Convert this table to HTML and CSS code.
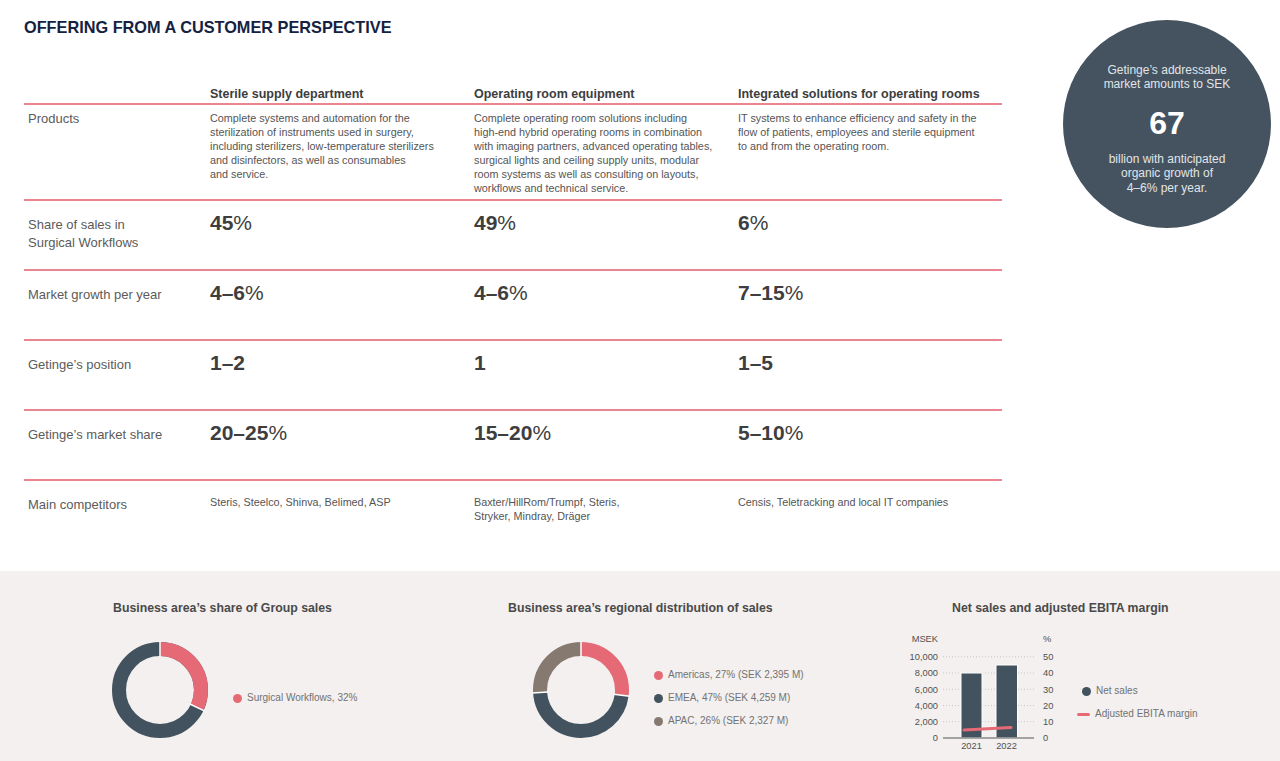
FILE: index.html
```html
<!DOCTYPE html>
<html lang="en">
<head>
<meta charset="utf-8">
<title>Offering from a customer perspective</title>
<link rel="stylesheet" href="styles.css">
</head>
<body>
<div class="page">
  <section class="top">
    <div class="main">
      <h1 class="title">OFFERING FROM A CUSTOMER PERSPECTIVE</h1>
      <div class="table">
        <div class="row head">
          <div class="lbl"></div>
          <div class="th">Sterile supply department</div>
          <div class="th">Operating room equipment</div>
          <div class="th">Integrated solutions for operating rooms</div>
        </div>
        <div class="row products">
          <div class="lbl">Products</div>
          <div class="desc">Complete systems and automation for the<br>sterilization of instruments used in surgery,<br>including sterilizers, low-temperature sterilizers<br>and disinfectors, as well as consumables<br>and service.</div>
          <div class="desc">Complete operating room solutions including<br>high-end hybrid operating rooms in combination<br>with imaging partners, advanced operating tables,<br>surgical lights and ceiling supply units, modular<br>room systems as well as consulting on layouts,<br>workflows and technical service.</div>
          <div class="desc">IT systems to enhance efficiency and safety in the<br>flow of patients, employees and sterile equipment<br>to and from the operating room.</div>
        </div>
        <div class="row num">
          <div class="lbl">Share of sales in<br>Surgical Workflows</div>
          <div class="val">45<span class="pct">%</span></div>
          <div class="val">49<span class="pct">%</span></div>
          <div class="val">6<span class="pct">%</span></div>
        </div>
        <div class="row num">
          <div class="lbl">Market growth per year</div>
          <div class="val">4–6<span class="pct">%</span></div>
          <div class="val">4–6<span class="pct">%</span></div>
          <div class="val">7–15<span class="pct">%</span></div>
        </div>
        <div class="row num">
          <div class="lbl">Getinge’s position</div>
          <div class="val">1–2</div>
          <div class="val">1</div>
          <div class="val">1–5</div>
        </div>
        <div class="row num">
          <div class="lbl">Getinge’s market share</div>
          <div class="val">20–25<span class="pct">%</span></div>
          <div class="val">15–20<span class="pct">%</span></div>
          <div class="val">5–10<span class="pct">%</span></div>
        </div>
        <div class="row comp">
          <div class="lbl">Main competitors</div>
          <div class="ctext">Steris, Steelco, Shinva, Belimed, ASP</div>
          <div class="ctext">Baxter/HillRom/Trumpf, Steris,<br>Stryker, Mindray, Dräger</div>
          <div class="ctext">Censis, Teletracking and local IT companies</div>
        </div>
      </div>
    </div>
    <aside class="bubble">
      <p class="bub-text">Getinge’s addressable<br>market amounts to SEK</p>
      <p class="bub-num">67</p>
      <p class="bub-text">billion with anticipated<br>organic growth of<br>4–6% per year.</p>
    </aside>
  </section>

  <section class="bottom">
    <div class="panel p1">
      <h2 class="ptitle">Business area’s share of Group sales</h2>
      <div class="chart">
        <svg class="donut" width="100" height="100" viewBox="0 0 100 100">
          <g transform="rotate(-90 50 50)">
            <circle cx="50" cy="50" r="41" fill="none" stroke="#43525f" stroke-width="14"/>
            <circle cx="50" cy="50" r="41" fill="none" stroke="#e56a75" stroke-width="14" stroke-dasharray="82.44 257.61"/>
          </g>
          <line x1="50" y1="17" x2="50" y2="1" stroke="#fff" stroke-width="1.5"/>
          <line x1="79.86" y1="64.05" x2="94.34" y2="70.86" stroke="#fff" stroke-width="1.5"/>
        </svg>
        <ul class="legend">
          <li><span class="dot pink"></span>Surgical Workflows, 32%</li>
        </ul>
      </div>
    </div>

    <div class="panel p2">
      <h2 class="ptitle">Business area’s regional distribution of sales</h2>
      <div class="chart">
        <svg class="donut" width="100" height="100" viewBox="0 0 100 100">
          <g transform="rotate(-90 50 50)">
            <circle cx="50" cy="50" r="41" fill="none" stroke="#e56a75" stroke-width="14" stroke-dasharray="69.55 257.61"/>
            <circle cx="50" cy="50" r="41" fill="none" stroke="#43525f" stroke-width="14" stroke-dasharray="121.08 257.61" stroke-dashoffset="-69.55"/>
            <circle cx="50" cy="50" r="41" fill="none" stroke="#857970" stroke-width="14" stroke-dasharray="66.98 257.61" stroke-dashoffset="-190.63"/>
          </g>
          <line x1="50" y1="17" x2="50" y2="1" stroke="#fff" stroke-width="1.5"/>
          <line x1="82.74" y1="54.14" x2="98.61" y2="56.14" stroke="#fff" stroke-width="1.5"/>
          <line x1="17.07" y1="52.07" x2="1.10" y2="53.08" stroke="#fff" stroke-width="1.5"/>
        </svg>
        <ul class="legend">
          <li><span class="dot pink"></span>Americas, 27% (SEK 2,395 M)</li>
          <li><span class="dot slate"></span>EMEA, 47% (SEK 4,259 M)</li>
          <li><span class="dot taupe"></span>APAC, 26% (SEK 2,327 M)</li>
        </ul>
      </div>
    </div>

    <div class="panel p3">
      <h2 class="ptitle">Net sales and adjusted EBITA margin</h2>
      <div class="chart chart3">
        <svg class="bars" width="160" height="128" viewBox="0 0 160 128">
          <text class="ax" x="38" y="12" text-anchor="end">MSEK</text>
          <text class="ax" x="143" y="12">%</text>
          <g class="grid">
            <line x1="43" y1="26.75" x2="134" y2="26.75"/>
            <line x1="43" y1="43" x2="134" y2="43"/>
            <line x1="43" y1="59.25" x2="134" y2="59.25"/>
            <line x1="43" y1="75.5" x2="134" y2="75.5"/>
            <line x1="43" y1="91.75" x2="134" y2="91.75"/>
          </g>
          <text class="ax" x="38" y="30" text-anchor="end">10,000</text>
          <text class="ax" x="38" y="46.3" text-anchor="end">8,000</text>
          <text class="ax" x="38" y="62.5" text-anchor="end">6,000</text>
          <text class="ax" x="38" y="78.8" text-anchor="end">4,000</text>
          <text class="ax" x="38" y="95" text-anchor="end">2,000</text>
          <text class="ax" x="38" y="111.3" text-anchor="end">0</text>
          <text class="ax" x="143" y="30">50</text>
          <text class="ax" x="143" y="46.3">40</text>
          <text class="ax" x="143" y="62.5">30</text>
          <text class="ax" x="143" y="78.8">20</text>
          <text class="ax" x="143" y="95">10</text>
          <text class="ax" x="143" y="111.3">0</text>
          <rect x="61" y="43" width="21" height="65" fill="#43525f" stroke="#fff" stroke-width="1"/>
          <rect x="96" y="35" width="21.5" height="73" fill="#43525f" stroke="#fff" stroke-width="1"/>
          <line x1="43" y1="108" x2="134" y2="108" stroke="#8a8a8a" stroke-width="1.5"/>
          <line x1="64" y1="100" x2="111" y2="97.6" stroke="#e56a75" stroke-width="3" stroke-linecap="round"/>
          <text class="ax" x="71.5" y="118.5" text-anchor="middle">2021</text>
          <text class="ax" x="106.5" y="118.5" text-anchor="middle">2022</text>
        </svg>
        <ul class="legend legend3">
          <li><span class="dot slate dot3"></span>Net sales</li>
          <li><span class="bar-line"></span>Adjusted EBITA margin</li>
        </ul>
      </div>
    </div>
  </section>
</div>
</body>
</html>
```

FILE: styles.css
```css
* { box-sizing: border-box; }

body {
  margin: 0;
  background: #ffffff;
  font-family: "Liberation Sans", Arial, sans-serif;
  color: #555555;
}

.page {
  width: 1280px;
}

/* ---------- top ---------- */
.top {
  display: flex;
  height: 571px;
}

.main {
  width: 1002px;
  padding-left: 24px;
}

.title {
  margin: 0;
  padding-top: 18px;
  font-size: 16.3px;
  line-height: 18px;
  font-weight: 700;
  color: #15223f;
}

.table {
  margin-top: 51px;
  width: 978px;
}

.row {
  display: grid;
  grid-template-columns: 186px 264px 264px 264px;
  border-bottom: 2px solid #eb8690;
  box-sizing: content-box;
}

.row.head {
  padding-bottom: 1px;
}

.th {
  font-size: 12.5px;
  line-height: 15px;
  font-weight: 700;
  color: #3d3d3d;
}

.lbl {
  padding-left: 4px;
  font-size: 13px;
  line-height: 18px;
  color: #5b5b5b;
}

.products {
  height: 94px;
}

.products .lbl {
  padding-top: 5px;
}

.desc {
  padding-top: 6px;
  font-size: 10.8px;
  line-height: 14px;
  color: #555555;
  white-space: nowrap;
}

.num {
  height: 68px;
}

.num .lbl {
  padding-top: 15px;
}

.val {
  padding-top: 10px;
  font-size: 21px;
  line-height: 24px;
  font-weight: 700;
  color: #3e3e3e;
}

.pct {
  font-weight: 400;
}

.comp {
  border-bottom: none;
}

.comp .lbl {
  padding-top: 15px;
}

.ctext {
  padding-top: 14px;
  font-size: 10.8px;
  line-height: 14px;
  color: #555555;
  white-space: nowrap;
}

/* ---------- bubble ---------- */
.bubble {
  width: 208px;
  height: 208px;
  margin: 20px 0 0 61px;
  border-radius: 50%;
  background: #44535f;
  display: flex;
  flex-direction: column;
  align-items: center;
  padding-top: 43px;
  text-align: center;
  color: #e1e5e8;
}

.bub-text {
  margin: 0;
  font-size: 12px;
  line-height: 14.4px;
}

.bub-num {
  margin: 13px 0 11px;
  font-size: 32px;
  line-height: 36px;
  font-weight: 700;
  color: #ffffff;
}

/* ---------- bottom ---------- */
.bottom {
  display: flex;
  height: 190px;
  background: #f3f0ef;
}

.panel {
  display: flex;
  flex-direction: column;
}

.p1 {
  margin-left: 110px;
  width: 398px;
}

.p2 {
  width: 392px;
}

.p3 {
  flex: 1;
}

.ptitle {
  margin: 0;
  padding-top: 30px;
  font-size: 12.3px;
  line-height: 15px;
  font-weight: 700;
  color: #4a4a4a;
}

.p1 .ptitle {
  padding-left: 3px;
}

.p3 .ptitle {
  padding-left: 52px;
}

.chart {
  display: flex;
  align-items: center;
  margin-top: 24px;
}

.p2 .chart {
  padding-left: 23px;
}

.donut {
  display: block;
  flex: none;
}

.legend {
  list-style: none;
  margin: 16px 0 0 23px;
  padding: 0;
  display: flex;
  flex-direction: column;
  gap: 9px;
  font-size: 10px;
  line-height: 14px;
  color: #727272;
}

.legend li {
  display: flex;
  align-items: center;
  gap: 5px;
  white-space: nowrap;
}

.dot {
  width: 9px;
  height: 9px;
  border-radius: 50%;
  flex: none;
}

.pink { background: #e56a75; }
.slate { background: #43525f; }
.taupe { background: #857970; }

.chart3 {
  margin-top: 14px;
  align-items: flex-start;
}

.bars {
  display: block;
  flex: none;
}

.ax {
  font-family: "Liberation Sans", Arial, sans-serif;
  font-size: 9.3px;
  fill: #505050;
}

.grid line {
  stroke: #c9c6c5;
  stroke-width: 1;
  stroke-dasharray: 1 2;
}

.legend3 {
  margin: 54px 0 0 17px;
  gap: 9.3px;
}

.dot3 {
  margin-left: 5px;
}

.bar-line {
  width: 13px;
  height: 3px;
  border-radius: 2px;
  background: #e56a75;
  flex: none;
}
```
